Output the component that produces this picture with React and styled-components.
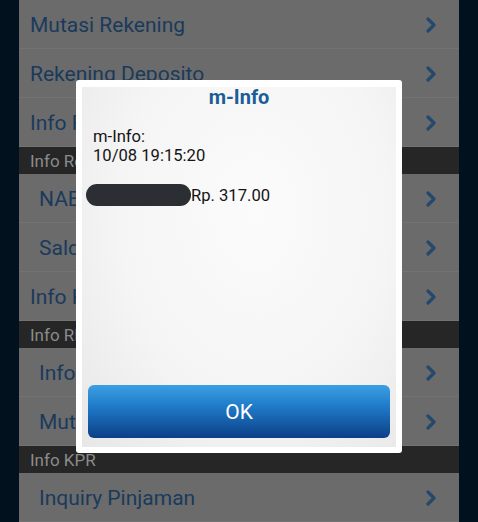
import React from "react";
import styled, { createGlobalStyle } from "styled-components";

const GlobalStyle = createGlobalStyle`
  html, body {
    margin: 0;
    padding: 0;
    background: #02111e;
    font-family: Roboto, "Liberation Sans", sans-serif;
  }
`;

const Screen = styled.div`
  position: relative;
  width: 478px;
  height: 522px;
  overflow: hidden;
  background: #02111e;
  padding: 0 19px;
  box-sizing: border-box;
`;

const Panel = styled.div`
  background: #6b6b6b;
  height: 100%;
  display: flex;
  flex-direction: column;
`;

const Row = styled.div`
  height: 49px;
  flex: none;
  display: flex;
  align-items: center;
  justify-content: space-between;
  padding: 2px 22px 0 ${(p) => (p.$indent ? 20 : 11)}px;
  box-sizing: border-box;
  border-bottom: 1px solid #737373;
  color: #1a3a5b;
  font-size: 21px;
  span {
    white-space: nowrap;
  }
`;

const Section = styled.div`
  height: 27px;
  flex: none;
  display: flex;
  align-items: center;
  padding: 0 11px;
  background: #262626;
  color: #8b8b8b;
  font-size: 17px;
`;

const Chevron = () => (
  <svg width="12" height="16" viewBox="0 0 12 16">
    <polyline
      points="3,2 9,8 3,14"
      fill="none"
      stroke="#24496c"
      strokeWidth="3.2"
      strokeLinecap="round"
      strokeLinejoin="round"
    />
  </svg>
);

const Dialog = styled.div`
  position: absolute;
  left: 76px;
  top: 80px;
  width: 326px;
  height: 373px;
  box-sizing: border-box;
  padding: 7px 6px 6px;
  background: #ffffff;
  border-radius: 3px;
  display: flex;
`;

const DialogInner = styled.div`
  flex: 1;
  display: flex;
  flex-direction: column;
  background: radial-gradient(ellipse at 55% 35%, #fbfbfb 0%, #f5f5f5 55%, #e7e7e7 100%);
  padding: 0 6px 9px;
`;

const Title = styled.div`
  text-align: center;
  color: #1b5e95;
  font-weight: bold;
  font-size: 20px;
  line-height: 20px;
`;

const Body = styled.div`
  margin-top: 20px;
  padding-left: 5px;
  color: #141414;
  font-size: 16.6px;
  line-height: 19px;
`;

const Line = styled.div`
  display: flex;
  align-items: center;
  min-height: 19px;
`;

const Redacted = styled.span`
  display: inline-block;
  width: 105px;
  height: 22px;
  border-radius: 11px;
  background: #2b2e32;
  margin-left: -7px;
`;

const OkButton = styled.div`
  margin-top: auto;
  height: 53px;
  border-radius: 6px;
  background: linear-gradient(#3c9fe3 0%, #1f7bc9 40%, #0c3f87 100%);
  color: #ffffff;
  font-size: 21px;
  display: flex;
  align-items: center;
  justify-content: center;
`;

const rows = [
  { label: "Mutasi Rekening" },
  { label: "Rekening Deposito" },
  { label: "Info Rekening" },
  { section: "Info Reksa Dana" },
  { label: "NAB Reksa Dana", indent: true },
  { label: "Saldo Reksa Dana", indent: true },
  { label: "Info Kurs" },
  { section: "Info RDN" },
  { label: "Info Saldo RDN", indent: true },
  { label: "Mutasi RDN", indent: true },
  { section: "Info KPR" },
  { label: "Inquiry Pinjaman", indent: true },
];

export default function App() {
  return (
    <Screen>
      <GlobalStyle />
      <Panel>
        {rows.map((r, i) =>
          r.section ? (
            <Section key={i}>{r.section}</Section>
          ) : (
            <Row key={i} $indent={r.indent}>
              <span>{r.label}</span>
              <Chevron />
            </Row>
          )
        )}
      </Panel>
      <Dialog>
        <DialogInner>
          <Title>m-Info</Title>
          <Body>
            <Line>m-Info:</Line>
            <Line>10/08 19:15:20</Line>
            <Line />
            <Line>
              <Redacted />
              Rp. 317.00
            </Line>
          </Body>
          <OkButton>OK</OkButton>
        </DialogInner>
      </Dialog>
    </Screen>
  );
}
